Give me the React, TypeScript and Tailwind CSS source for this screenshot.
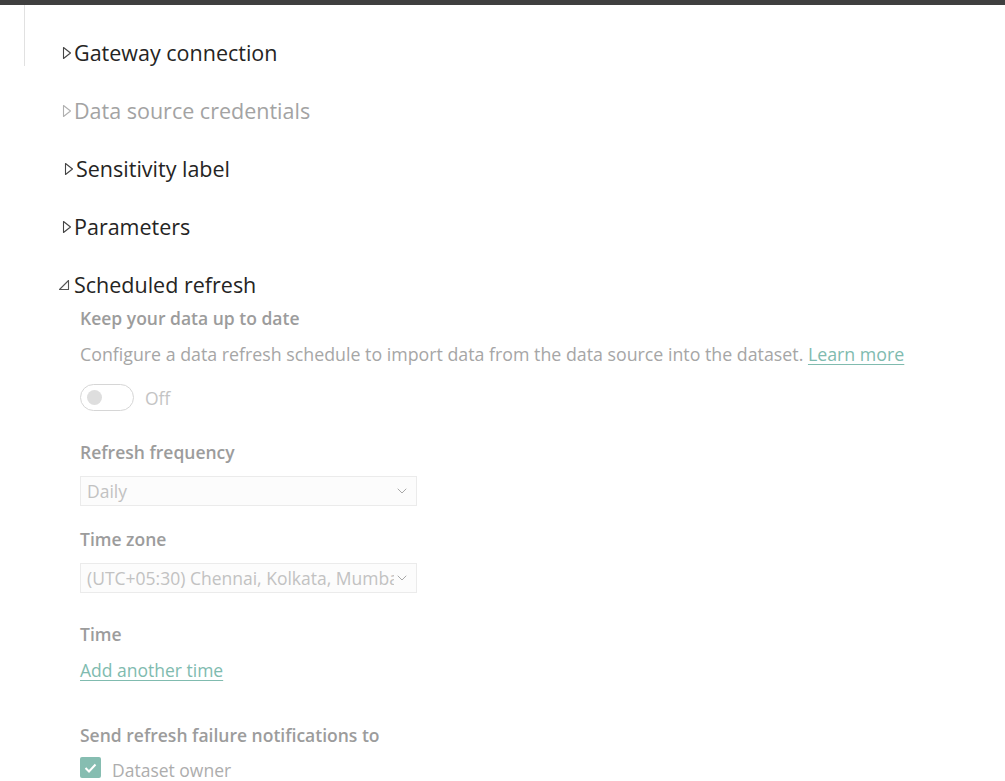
import { ChevronDown } from 'lucide-react';

const font = { fontFamily: '"Open Sans", "Noto Sans", sans-serif' };

function Closed() {
  return (
    <svg width="10" height="14" viewBox="0 0 10 14" className="shrink-0">
      <path d="M1.5 1.5 L8.5 7 L1.5 12.5 Z" fill="none" stroke="currentColor" strokeWidth="1.1" strokeLinejoin="round" />
    </svg>
  );
}

function Opened() {
  return (
    <svg width="12" height="12" viewBox="0 0 12 12" className="shrink-0">
      <path d="M10.5 1.5 L10.5 10.5 L1.5 10.5 Z" fill="none" stroke="currentColor" strokeWidth="1.1" strokeLinejoin="round" />
    </svg>
  );
}

type Row = { label: string; muted?: boolean; indent: string };

const closedRows: Array<Row> = [
  { label: 'Gateway connection', indent: 'ml-[62px]' },
  { label: 'Data source credentials', muted: true, indent: 'ml-[62px]' },
  { label: 'Sensitivity label', indent: 'ml-[64px]' },
  { label: 'Parameters', indent: 'ml-[62px]' },
];

function Select({ value }: { value: string }) {
  return (
    <div className="w-[337px] h-[30px] border border-[#ebebeb] bg-[#fcfcfc] flex items-center pl-[6px] pr-[6px]">
      <span className="flex-1 text-[17.5px] leading-[28px] text-[#c2c2c2] whitespace-nowrap overflow-hidden">{value}</span>
      <ChevronDown size={16} strokeWidth={1.5} className="text-[#a8a8a8] shrink-0" />
    </div>
  );
}

const label = 'h-[24px] leading-[24px] text-[17.5px] font-semibold text-[#9c9c9c]';

function App() {
  return (
    <div className="w-full h-[781px] bg-white overflow-hidden" style={font}>
      <div className="h-[5px] bg-[#3f3f3f]" />
      <div className="flex">
        <div className="w-[24px] shrink-0" />
        <div className="w-px h-[61px] bg-[#e1e1e1] shrink-0" />
        <div className="flex-1 -ml-[25px] pt-[34px]">
          {closedRows.map((row) => (
            <div
              key={row.label}
              className={`flex items-center h-[28px] mb-[30px] gap-[2px] text-[21.5px] leading-[28px] ${row.indent} ${row.muted ? 'text-[#a3a3a3]' : 'text-[#252423]'}`}
            >
              <span className={row.muted ? 'text-[#b0b0b0]' : 'text-[#444]'}>
                <Closed />
              </span>
              <span>{row.label}</span>
            </div>
          ))}

          <div className="flex items-center h-[28px] ml-[58px] gap-[4px] text-[21.5px] leading-[28px] text-[#252423]">
            <span className="text-[#555]">
              <Opened />
            </span>
            <span>Scheduled refresh</span>
          </div>

          <div className="ml-[80px] mt-[7px]">
            <div className={label}>Keep your data up to date</div>
            <div className="mt-[12px] h-[24px] leading-[24px] text-[17.8px] text-[#a6a6a6] whitespace-nowrap">
              Configure a data refresh schedule to import data from the data source into the dataset.{' '}
              <a className="text-[#80bbaf] underline underline-offset-[3px]">Learn more</a>
            </div>
            <div className="mt-[18px] h-[27px] flex items-center gap-[11px]">
              <div className="w-[54px] h-[27px] rounded-full border border-[#d6d6d6] flex items-center pl-[6px]">
                <div className="w-[15px] h-[15px] rounded-full bg-[#dedede]" />
              </div>
              <span className="text-[17.5px] leading-[24px] text-[#c4c4c4]">Off</span>
            </div>

            <div className={`mt-[29px] ${label}`}>Refresh frequency</div>
            <div className="mt-[12px]">
              <Select value="Daily" />
            </div>

            <div className={`mt-[21px] ${label}`}>Time zone</div>
            <div className="mt-[12px]">
              <Select value="(UTC+05:30) Chennai, Kolkata, Mumbai, New Delhi" />
            </div>

            <div className={`mt-[29px] ${label}`}>Time</div>
            <div className="mt-[12px] h-[24px] leading-[24px] text-[17.5px]">
              <a className="text-[#80bbaf] underline underline-offset-[3px]">Add another time</a>
            </div>

            <div className={`mt-[41px] ${label}`}>Send refresh failure notifications to</div>
            <div className="mt-[10px] h-[21px] flex items-center gap-[11px]">
              <div className="w-[21px] h-[21px] rounded-[2px] bg-[#86bdb1] flex items-center justify-center shrink-0">
                <svg width="13" height="10" viewBox="0 0 13 10">
                  <path d="M1.5 5 L5 8.5 L11.5 1.5" fill="none" stroke="white" strokeWidth="2" />
                </svg>
              </div>
              <span className="text-[17.5px] leading-[24px] text-[#adadad] mt-[4px]">Dataset owner</span>
            </div>
          </div>
        </div>
      </div>
    </div>
  );
}

export default App;
